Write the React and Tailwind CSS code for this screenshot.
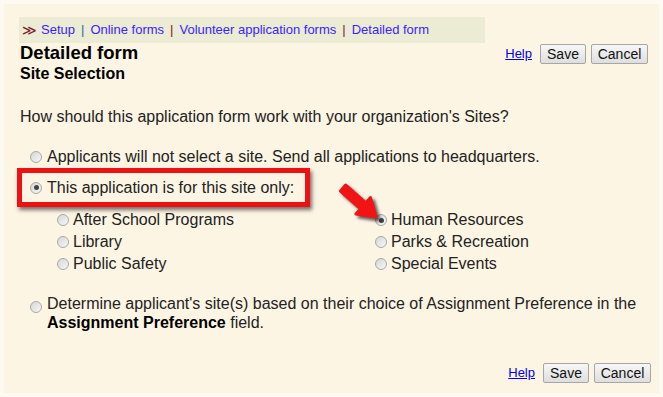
import React from "react";

function Radio({ checked }) {
  return (
    <span className="relative inline-flex h-[12px] w-[12px] shrink-0 items-center justify-center rounded-full border border-[#a8a8a8] bg-[linear-gradient(135deg,#d6d6d6,#f7f7f7)]">
      {checked && <span className="h-[5px] w-[5px] rounded-full bg-[#444]" />}
    </span>
  );
}

function Buttons({ className }) {
  return (
    <div className={"flex items-center " + className}>
      <a className="mr-[8px] text-[13px] text-[#0000ee] underline">Help</a>
      <button className="mr-[5px] h-[20px] w-[46px] rounded-[2px] border border-[#a6a6a6] bg-[linear-gradient(#f7f7f7,#dedede)] text-[14px] leading-none text-[#111]">
        Save
      </button>
      <button className="h-[20px] w-[57px] rounded-[2px] border border-[#a6a6a6] bg-[linear-gradient(#f7f7f7,#dedede)] text-[14px] leading-none text-[#111]">
        Cancel
      </button>
    </div>
  );
}

function Sub({ checked, label }) {
  return (
    <div className="flex h-[22px] items-center">
      <Radio checked={checked} />
      <span className="ml-[4px]">{label}</span>
    </div>
  );
}

export default function App() {
  return (
    <div
      className="h-[397px] w-[663px] bg-[#fefaf2] p-[4px] text-[#222]"
      style={{ fontFamily: '"Liberation Sans", Arial, sans-serif' }}
    >
      <div className="relative h-full bg-[#fdf5e4] pl-[15px] pr-[11px] pt-[13px] text-[16px]">
        {/* breadcrumb */}
        <div className="flex h-[26px] w-[466px] items-center bg-[#ecebd3] pl-[3px] text-[13px] text-[#3a1fff]">
          <span className="mr-[4px] text-[14px] leading-none text-[#7a1a2a]">≫</span>
          <span>Setup</span>
          <span className="mx-[6px] text-[#1f6f8f]">|</span>
          <span>Online forms</span>
          <span className="mx-[6px] text-[#7a1a2a]">|</span>
          <span>Volunteer application forms</span>
          <span className="mx-[6px] text-[#7a1a2a]">|</span>
          <span>Detailed form</span>
        </div>

        {/* header */}
        <div className="flex items-start justify-between">
          <div className="pl-[1px] font-bold text-black">
            <div className="text-[18.5px] leading-[20px]">Detailed form</div>
            <div className="text-[16px] leading-[21px]">Site Selection</div>
          </div>
          <Buttons className="mt-[1px]" />
        </div>

        <div className="mt-[23px] pl-[1px] leading-[20px]">
          How should this application form work with your organization's Sites?
        </div>

        <div className="mt-[20px] flex h-[20px] items-center pl-[11px]">
          <Radio />
          <span className="ml-[5px]">Applicants will not select a site. Send all applications to headquarters.</span>
        </div>

        <div className="ml-[-2px] mt-[1px] flex h-[39px] w-[293px] items-center border-[5px] border-[#ee1111] pl-[8px] shadow-[2px_3px_4px_rgba(0,0,0,0.55)]">
          <Radio checked />
          <span className="ml-[5px]">This application is for this site only:</span>
        </div>

        <div className="mt-[2px] grid grid-cols-[318px_1fr] pl-[38px]">
          <div>
            <Sub label="After School Programs" />
            <Sub label="Library" />
            <Sub label="Public Safety" />
          </div>
          <div>
            <Sub checked label="Human Resources" />
            <Sub label="Parks & Recreation" />
            <Sub label="Special Events" />
          </div>
        </div>

        <div className="mt-[19px] flex pl-[11px] leading-[19px]">
          <span className="mt-[4px]">
            <Radio />
          </span>
          <span className="ml-[5px]">
            Determine applicant's site(s) based on their choice of Assignment Preference in the{" "}
            <b className="text-black">Assignment Preference</b> field.
          </span>
        </div>

        <Buttons className="mr-[-3px] mt-[31px] justify-end" />

        {/* annotation arrow */}
        <svg
          className="pointer-events-none absolute left-[326px] top-[172px]"
          width="60"
          height="52"
          viewBox="0 0 60 52"
        >
          <defs>
            <filter id="sh" x="-30%" y="-30%" width="160%" height="160%">
              <feGaussianBlur stdDeviation="1.6" />
            </filter>
          </defs>
          <g transform="translate(3,3)" filter="url(#sh)" opacity="0.6">
            <path
              d="M15.6 9 L35.8 26.8 L40.5 21.5 L46 41 L25.9 38.1 L30.6 32.8 L10.4 15 Z"
              fill="#000"
              stroke="#000"
              strokeWidth="3"
              strokeLinejoin="round"
            />
          </g>
          <path
            d="M15.6 9 L35.8 26.8 L40.5 21.5 L46 41 L25.9 38.1 L30.6 32.8 L10.4 15 Z"
            fill="#f21414"
            stroke="#f21414"
            strokeWidth="3"
            strokeLinejoin="round"
          />
        </svg>
      </div>
    </div>
  );
}
